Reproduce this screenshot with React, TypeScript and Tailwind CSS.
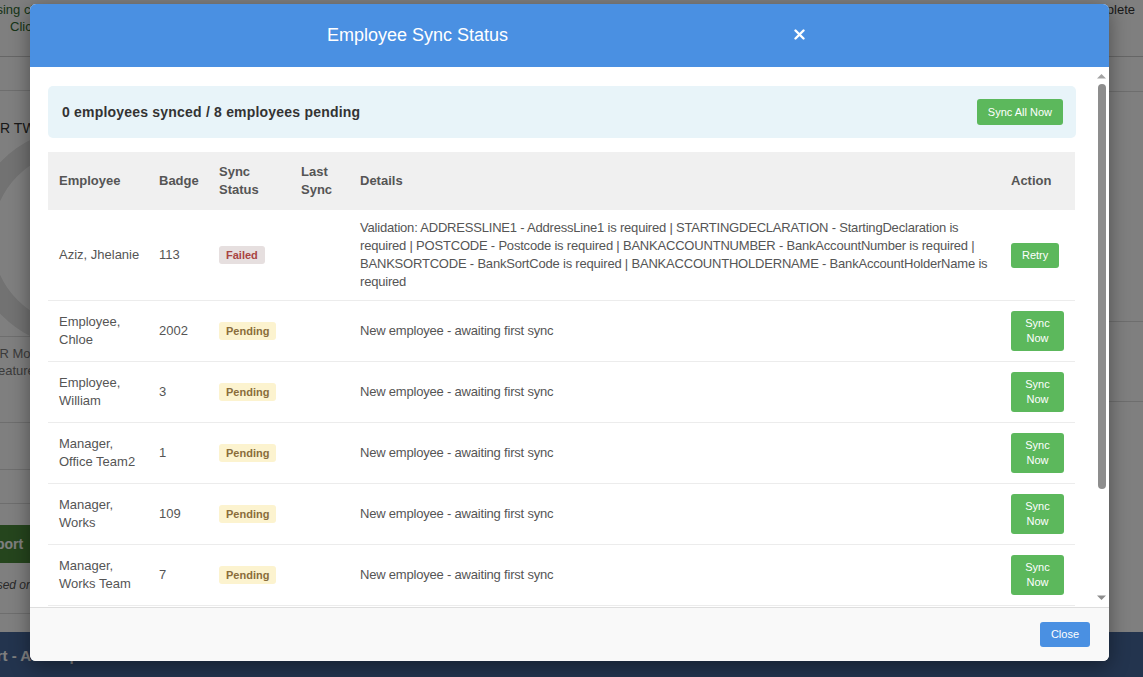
import React from "react";

type Row = {
  name: string[];
  badge: string;
  status: "Failed" | "Pending";
  details: string;
  action: string;
};

const rows: Row[] = [
  {
    name: ["Aziz, Jhelanie"],
    badge: "113",
    status: "Failed",
    details:
      "Validation: ADDRESSLINE1 - AddressLine1 is required | STARTINGDECLARATION - StartingDeclaration is required | POSTCODE - Postcode is required | BANKACCOUNTNUMBER - BankAccountNumber is required | BANKSORTCODE - BankSortCode is required | BANKACCOUNTHOLDERNAME - BankAccountHolderName is required",
    action: "Retry",
  },
  { name: ["Employee,", "Chloe"], badge: "2002", status: "Pending", details: "New employee - awaiting first sync", action: "Sync Now" },
  { name: ["Employee,", "William"], badge: "3", status: "Pending", details: "New employee - awaiting first sync", action: "Sync Now" },
  { name: ["Manager,", "Office Team2"], badge: "1", status: "Pending", details: "New employee - awaiting first sync", action: "Sync Now" },
  { name: ["Manager,", "Works"], badge: "109", status: "Pending", details: "New employee - awaiting first sync", action: "Sync Now" },
  { name: ["Manager,", "Works Team"], badge: "7", status: "Pending", details: "New employee - awaiting first sync", action: "Sync Now" },
  { name: ["Staff,", "Alex"], badge: "12", status: "Pending", details: "New employee - awaiting first sync", action: "Sync Now" },
];

function StatusBadge({ status }: { status: Row["status"] }) {
  const cls =
    status === "Failed"
      ? "bg-[#e6dfdf] text-[#a94442]"
      : "bg-[#fcf3cf] text-[#8a6d3b]";
  return (
    <span className={`inline-block rounded-[3px] px-[7px] py-[2px] text-[11px] font-bold leading-[14px] ${cls}`}>
      {status}
    </span>
  );
}

function BackgroundPage() {
  return (
    <div className="h-[677px] w-full bg-white flex flex-col overflow-hidden">
      <div className="h-[57px] border-b border-[#ccc] text-[13px] text-[#2f6b2f] leading-[17px] pt-[1px]">
        <div className="flex justify-between -ml-[44px] pr-2">
          <span>Processing checking complete</span>
          <span className="text-[#333]">20 records</span>
          <span className="text-[#333]">Mark this period as complete</span>
        </div>
        <div className="pl-[10px]">Click here</div>
      </div>
      <div className="flex-1 flex">
        <div className="w-[300px] border-r border-[#ddd] flex flex-col">
          <div className="h-[34px] border-b border-[#ddd]" />
          <div className="h-[27px]" />
          <div className="text-[14px] text-[#333] -ml-[10px] leading-[20px]">HR TW</div>
          <div className="h-[198px] overflow-hidden">
            <div className="w-[220px] h-[220px] rounded-full border-[22px] border-[#e4e4e4] -ml-[30px] mt-[-10px]" />
          </div>
          <div className="border-t border-[#ddd] pt-[8px] text-[13px] text-[#777] leading-[17px] -ml-[10px]">
            <div>HR Modules</div>
            <div>Features</div>
          </div>
          <div className="h-[44px] border-b border-[#ddd]" />
          <div className="h-[47px] border-b border-[#ddd]" />
          <div className="h-[34px] border-b border-[#ddd]" />
          <div className="mt-[21px] h-[38px] w-[200px] bg-[#4b8a3a] text-white font-bold text-[14px] flex items-center">
            <span className="-ml-[22px]">Report</span>
          </div>
          <div className="mt-[14px] text-[12px] italic text-[#555] -ml-[18px] leading-[16px]">Based on</div>
          <div className="mt-[20px] border-b border-[#ddd]" />
        </div>
        <div className="flex-1 flex flex-col">
          <div className="h-[35px] border-b border-[#ddd]" />
          <div className="h-[230px] border-b border-[#ddd]" />
          <div className="h-[80px] border-b border-[#ddd]" />
        </div>
      </div>
      <div className="h-[45px] bg-[#46699c] text-white font-bold text-[15px] flex items-center">
        <span className="-ml-[50px] pt-[4px]">Support - Ask a question</span>
      </div>
    </div>
  );
}

function Scrollbar() {
  return (
    <div className="w-[15px] shrink-0 flex flex-col items-center pt-[6px] pb-[6px]">
      <svg width="9" height="6" viewBox="0 0 9 6"><path d="M0 5.5 L4.5 1 L9 5.5 Z" fill="#a3a3a3" /></svg>
      <div className="mt-[5px] w-[8px] h-[405px] rounded-full bg-[#8d8d8d]" />
      <div className="flex-1" />
      <svg width="9" height="6" viewBox="0 0 9 6"><path d="M0 0.5 L4.5 5 L9 0.5 Z" fill="#8d8d8d" /></svg>
    </div>
  );
}

export default function App() {
  return (
    <div className="relative h-[677px] w-[1143px] overflow-hidden" style={{ fontFamily: '"Liberation Sans", Arial, sans-serif' }}>
      <BackgroundPage />
      <div className="absolute inset-0 bg-black/50" />

      <div className="absolute left-[30px] top-[4px] w-[1079px] h-[657px] bg-white rounded-[6px] shadow-[0_5px_20px_rgba(0,0,0,0.4)] flex flex-col overflow-hidden">
        {/* Header */}
        <div className="h-[63px] shrink-0 bg-[#4a90e2] flex items-center pl-[297px]">
          <h2 className="w-[466px] text-white text-[18px] leading-none -mt-[2px]">Employee Sync Status</h2>
          <button className="w-[12px] h-[12px] flex items-center justify-center -mt-[2px]">
            <svg width="11" height="11" viewBox="0 0 11 11">
              <path d="M1.5 1.5 L9.5 9.5 M9.5 1.5 L1.5 9.5" stroke="white" strokeWidth="2.4" strokeLinecap="round" />
            </svg>
          </button>
        </div>

        {/* Body */}
        <div className="flex-1 min-h-0 flex">
          <div className="flex-1 min-w-0 overflow-hidden pl-[18px] pr-[18px] pt-[19px]">
            <div className="h-[52px] rounded-[5px] bg-[#e8f4f9] flex items-center justify-between pl-[14px] pr-[13px]">
              <span className="text-[14px] font-bold text-[#333] tracking-[0.2px]">
                0 employees synced / 8 employees pending
              </span>
              <button className="bg-[#5cb85c] text-white text-[11px] leading-[16px] px-[11px] py-[5px] rounded-[3px]">
                Sync All Now
              </button>
            </div>

            <table className="mt-[14px] w-[1027px] table-fixed border-collapse text-[13px] text-[#555]">
              <colgroup>
                <col className="w-[100px]" />
                <col className="w-[60px]" />
                <col className="w-[82px]" />
                <col className="w-[59px]" />
                <col className="w-[651px]" />
                <col className="w-[75px]" />
              </colgroup>
              <thead>
                <tr className="bg-[#f0f0f0] text-left font-bold text-[13px] leading-[18px]">
                  <th className="px-[11px] py-[11px] font-bold">Employee</th>
                  <th className="px-[11px] py-[11px] font-bold">Badge</th>
                  <th className="px-[11px] py-[11px] font-bold">Sync<br />Status</th>
                  <th className="px-[11px] py-[11px] font-bold">Last<br />Sync</th>
                  <th className="px-[11px] py-[11px] font-bold">Details</th>
                  <th className="px-[11px] py-[11px] font-bold">Action</th>
                </tr>
              </thead>
              <tbody className="leading-[18px]">
                {rows.map((r) => (
                  <tr key={r.name.join(" ")} className="border-b border-[#ececec]">
                    <td className="pl-[11px] pr-0 py-[10px] align-middle whitespace-nowrap">
                      {r.name.map((n) => (
                        <div key={n}>{n}</div>
                      ))}
                    </td>
                    <td className="px-[11px] py-[10px] align-middle">{r.badge}</td>
                    <td className="px-[11px] py-[10px] align-middle">
                      <StatusBadge status={r.status} />
                    </td>
                    <td className="px-[11px] py-[10px] align-middle" />
                    <td className="pl-[11px] pr-0 py-[9px] align-middle tracking-[-0.2px]">{r.details}</td>
                    <td className="px-[11px] py-[10px] align-middle">
                      <button className="bg-[#5cb85c] text-white text-[11px] leading-[15px] px-[11px] py-[5px] rounded-[3px]">
                        {r.action}
                      </button>
                    </td>
                  </tr>
                ))}
              </tbody>
            </table>
          </div>
          <Scrollbar />
        </div>

        {/* Footer */}
        <div className="h-[54px] shrink-0 border-t border-[#dedede] bg-[#f9f9f9] flex items-center justify-end pr-[19px]">
          <button className="bg-[#4a90e2] text-white text-[11px] leading-[15px] px-[11px] py-[5px] rounded-[3px]">
            Close
          </button>
        </div>
      </div>
    </div>
  );
}
